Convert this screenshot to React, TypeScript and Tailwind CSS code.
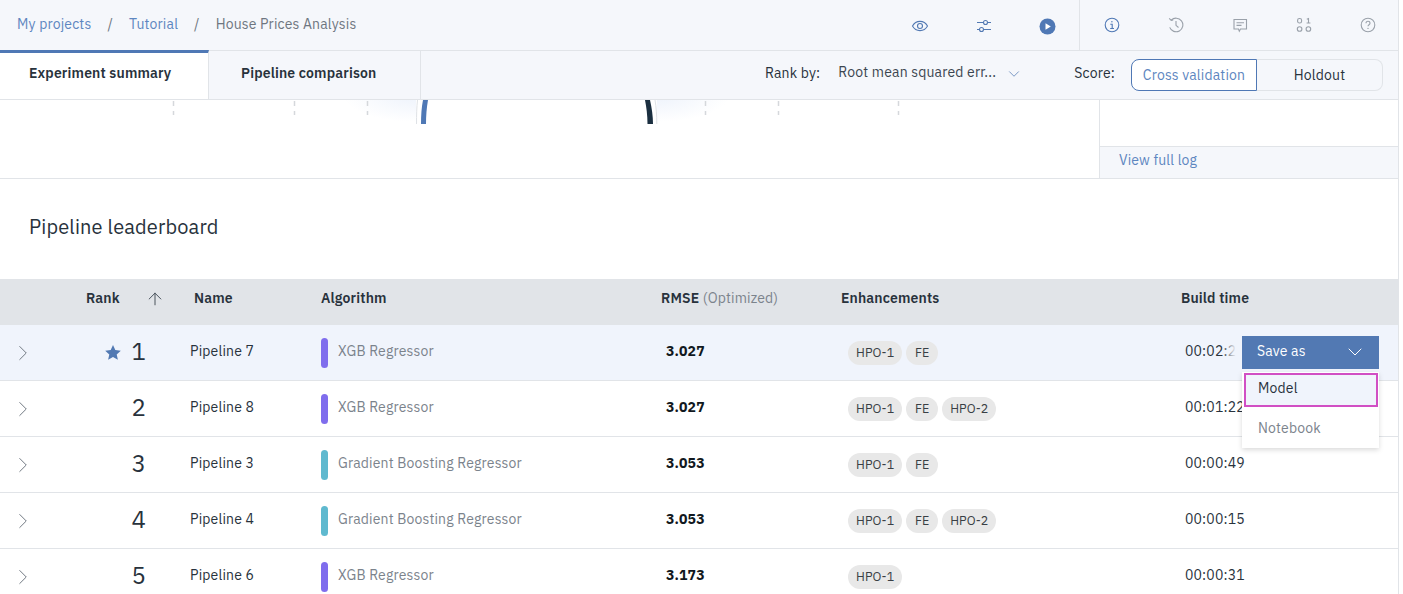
import { ChevronDown, ChevronRight, ArrowUp } from "lucide-react";

const rows = [
  { rank: 1, name: "Pipeline 7", algo: "XGB Regressor", color: "bg-[#7f6ded]", rmse: "3.027", tags: ["HPO-1", "FE"], time: "00:02:26", star: true },
  { rank: 2, name: "Pipeline 8", algo: "XGB Regressor", color: "bg-[#7f6ded]", rmse: "3.027", tags: ["HPO-1", "FE", "HPO-2"], time: "00:01:22" },
  { rank: 3, name: "Pipeline 3", algo: "Gradient Boosting Regressor", color: "bg-[#5fb9cf]", rmse: "3.053", tags: ["HPO-1", "FE"], time: "00:00:49" },
  { rank: 4, name: "Pipeline 4", algo: "Gradient Boosting Regressor", color: "bg-[#5fb9cf]", rmse: "3.053", tags: ["HPO-1", "FE", "HPO-2"], time: "00:00:15" },
  { rank: 5, name: "Pipeline 6", algo: "XGB Regressor", color: "bg-[#7f6ded]", rmse: "3.173", tags: ["HPO-1"], time: "00:00:31" },
];

function IconEye() {
  return (
    <svg width="18" height="18" viewBox="0 0 18 18" fill="none" stroke="#5279b3" strokeWidth="1.1">
      <path d="M1.500 9C3.200 5.900 5.800 4.400 9 4.400s5.800 1.500 7.500 4.600c-1.700 3.100-4.300 4.600-7.500 4.600S3.200 12.100 1.500 9z" />
      <circle cx="9" cy="9" r="2.500" />
    </svg>
  );
}

function IconSliders() {
  return (
    <svg width="16" height="16" viewBox="0 0 16 16" fill="none" stroke="#5279b3" strokeWidth="1.1">
      <path d="M1 4.500h6.500M11.500 4.500H15M1 11.500h2.500M7.500 11.500H15" />
      <circle cx="9.500" cy="4.500" r="2" />
      <circle cx="5.500" cy="11.500" r="2" />
    </svg>
  );
}

function IconPlay() {
  return (
    <svg width="17" height="17" viewBox="0 0 17 17">
      <circle cx="8.500" cy="8.500" r="8" fill="#4f78b5" />
      <path d="M6.500 5.200v6.600l5.300-3.300z" fill="#fff" />
    </svg>
  );
}

function IconInfo() {
  return (
    <svg width="16" height="16" viewBox="0 0 16 16" fill="none" stroke="#4f78b5" strokeWidth="1.1">
      <circle cx="8" cy="8" r="6.800" />
      <path d="M6.300 7.200H8.200v4.200M6.200 11.500h3.800" />
      <circle cx="7.900" cy="4.800" r="0.700" fill="#4f78b5" stroke="none" />
    </svg>
  );
}

function IconHistory() {
  return (
    <svg width="16" height="16" viewBox="0 0 16 16" fill="none" stroke="#9aa1aa" strokeWidth="1.1">
      <path d="M3.200 3.200A6.800 6.800 0 1 1 1.700 10.400" />
      <path d="M1.200 1.300l2 2 2-.4M8 4v4.300l2.500 2.200" />
    </svg>
  );
}

function IconComment() {
  return (
    <svg width="16" height="16" viewBox="0 0 16 16" fill="none" stroke="#9aa1aa" strokeWidth="1.1">
      <path d="M2 2.500h12.500v9.500H8.500l-1.200 2.200L6.500 12H2z" />
      <path d="M4.500 5.700h7.500M4.500 8.400h5" />
    </svg>
  );
}

function IconBinary() {
  return (
    <svg width="16" height="16" viewBox="0 0 16 16" fill="none" stroke="#9aa1aa" strokeWidth="1.100">
      <rect x="1.600" y="1.500" width="4" height="4.500" rx="1.800" />
      <path d="M10.800 2.200l1.700-.7V6M10.600 6h3.800" />
      <circle cx="3.600" cy="12" r="2.300" />
      <circle cx="12.400" cy="12" r="2.300" />
    </svg>
  );
}

function IconHelp() {
  return (
    <svg width="16" height="16" viewBox="0 0 16 16" fill="none" stroke="#9aa1aa" strokeWidth="1.1">
      <circle cx="8" cy="8" r="6.800" />
      <path d="M6 6.300c0-1.200.9-2 2-2s2 .8 2 1.900c0 1.500-2 1.500-2 3.100" />
      <circle cx="8" cy="11.400" r="0.700" fill="#9aa1aa" stroke="none" />
    </svg>
  );
}

function IconStar() {
  return (
    <svg width="16" height="15" viewBox="0 0 16 15">
      <path d="M8 0l2.300 5.100 5.500.6-4.100 3.700 1.200 5.400L8 12l-4.900 2.800 1.200-5.400L.2 5.700l5.500-.6z" fill="#5279b3" />
    </svg>
  );
}

// what is left of the chart after scrolling: tick lines and the two arcs
function ChartStub() {
  return (
    <svg width="1099" height="25" viewBox="0 0 1099 25" className="block">
      <defs>
        <radialGradient id="glowL" cx="0" cy="0" r="1" gradientUnits="userSpaceOnUse" gradientTransform="translate(416 -4) scale(72 26)">
          <stop offset="0" stopColor="#eef3fc" />
          <stop offset="1" stopColor="#eef3fc" stopOpacity="0" />
        </radialGradient>
        <radialGradient id="glowR" cx="0" cy="0" r="1" gradientUnits="userSpaceOnUse" gradientTransform="translate(657 -4) scale(72 26)">
          <stop offset="0" stopColor="#eef3fc" />
          <stop offset="1" stopColor="#eef3fc" stopOpacity="0" />
        </radialGradient>
      </defs>
      <rect x="340" y="0" width="76" height="25" fill="url(#glowL)" />
      <rect x="657" y="0" width="76" height="25" fill="url(#glowR)" />
      <g stroke="#d5d8dc" strokeWidth="1.500" strokeDasharray="5 5 4 6">
        <path d="M173.500 1v20M294.500 1v20M367.500 1v20M705.500 1v20M778.500 1v20M898.500 1v20" />
      </g>
      <path d="M417.500 0c-.8 7-1 15-1 24" stroke="#dfe2e6" fill="none" />
      <path d="M423 0c-1.400 7-2 15-2 24h5c0-8 .6-16 2-24z" fill="#4f78b5" />
      <path d="M645 0c1.400 7 2.500 15 2.500 24h5.500c0-8-1.200-16-3-24z" fill="#1b2f40" />
      <path d="M655 0c1.200 7 1.800 15 1.800 24" stroke="#dfe2e6" fill="none" />
    </svg>
  );
}

export default function App() {
  return (
    <div className="h-[594px] w-[1403px] overflow-hidden bg-white font-['IBM_Plex_Sans','Noto_Sans',sans-serif] text-[14px] tracking-[0.16px] text-[#28323c]">
      <div className="w-[1399px] border-r border-[#e1e4e8]">
        <header className="flex h-[51px] items-center justify-between border-b border-[#e1e4e8] bg-[#f5f7fb]">
          <nav className="flex items-center pb-px pl-[17px]">
            <span className="text-[#5d86c0]">My projects</span>
            <span className="ml-[16px] text-[#6e7680]">/</span>
            <span className="ml-[16px] text-[#5d86c0]">Tutorial</span>
            <span className="ml-[16px] text-[#6e7680]">/</span>
            <span className="ml-[16px] text-[#6e7680]">House Prices Analysis</span>
          </nav>
          <div className="flex h-full items-center">
            <div className="flex h-full items-center gap-[47px] pr-[23px] pt-[2px]">
              <IconEye />
              <IconSliders />
              <IconPlay />
            </div>
            <div className="flex h-full items-center gap-[48px] border-l border-[#e1e4e8] pl-[24px] pr-[22px]">
              <IconInfo />
              <IconHistory />
              <IconComment />
              <IconBinary />
              <IconHelp />
            </div>
          </div>
        </header>

        <div className="flex h-[49px] items-stretch justify-between border-b border-[#e1e4e8] bg-[#f5f7fb]">
          <div className="flex">
            <div className="-mt-px flex w-[209px] items-center border-r border-t-[3px] border-[#e1e4e8] border-t-[#4f78b5] bg-white pb-[5px] pl-[29px] font-semibold">
              Experiment summary
            </div>
            <div className="flex w-[212px] items-center border-r border-[#e1e4e8] pb-[4px] pl-[32px] font-semibold">
              Pipeline comparison
            </div>
          </div>
          <div className="flex items-center pr-[15px]">
            <span className="mb-[3px]">Rank by:</span>
            <span className="mb-[6px] ml-[18px] text-[#3c4650]">Root mean squared err...</span>
            <ChevronDown className="mb-[3px] ml-[9px] text-[#5279b3]" size={18} strokeWidth={1} />
            <span className="mb-[3px] ml-[51px]">Score:</span>
            <div className="ml-[16px] flex h-[32px]">
              <div className="flex w-[126px] items-center justify-center rounded-l-[8px] border border-[#4f78b5] bg-white text-[#5d86c0]">
                Cross validation
              </div>
              <div className="flex w-[126px] items-center justify-center rounded-r-[8px] border border-l-0 border-[#e1e4e8] bg-[#f5f7fb]">
                Holdout
              </div>
            </div>
          </div>
        </div>

        <div className="flex h-[79px] border-b border-[#e1e4e8]">
          <div className="w-[1099px]">
            <ChartStub />
          </div>
          <div className="flex flex-1 flex-col border-l border-[#e1e4e8]">
            <div className="flex-1" />
            <div className="flex h-[32px] items-center border-t border-[#e1e4e8] bg-[#f5f7fb] pb-[4px] pl-[19px] text-[#5d86c0]">
              View full log
            </div>
          </div>
        </div>

        <h2 className="flex h-[100px] items-center pb-[5px] pl-[29px] text-[20px] font-normal tracking-[0.15px]">
          Pipeline leaderboard
        </h2>

        <div className="relative">
          <div className="flex h-[46px] items-center bg-[#e1e4e8] pb-[7px] font-semibold">
            <span className="ml-[86px] w-[59px]">Rank</span>
            <ArrowUp className="text-[#3c4650]" size={20} strokeWidth={1.100} />
            <span className="ml-[29px] w-[127px]">Name</span>
            <span className="w-[340px]">Algorithm</span>
            <span className="w-[180px]">
              RMSE <span className="font-normal text-[#7b838c]">(Optimized)</span>
            </span>
            <span className="w-[340px]">Enhancements</span>
            <span>Build time</span>
          </div>

          {rows.map((row) => (
            <div
              key={row.rank}
              className={`flex h-[56px] items-center border-b border-[#e1e4e8] ${row.star ? "bg-[#f0f4fc]" : "bg-white"}`}
            >
              <ChevronRight className="ml-[10px] mt-px text-[#6e7680]" size={26} strokeWidth={0.9} />
              <div className="flex w-[110px] items-center justify-end gap-[10px]">
                {row.star && <IconStar />}
                <span className="mb-[4px] w-[15px] text-right text-[24px] font-normal leading-none">{row.rank}</span>
              </div>
              <span className="mb-[2px] ml-[44px] w-[131px]">{row.name}</span>
              <span className={`h-[30px] w-[7px] rounded-full ${row.color}`} />
              <span className="mb-[3px] ml-[10px] w-[328px] text-[#7b838c]">{row.algo}</span>
              <span className="mb-[2px] w-[182px] font-bold text-[#111820]">{row.rmse}</span>
              <div className="flex w-[337px] gap-[4px]">
                {row.tags.map((tag) => (
                  <span
                    key={tag}
                    className="flex h-[24px] min-w-[32px] items-center justify-center rounded-full bg-[#e8e8e8] px-[8px] pb-px text-[12.500px] tracking-[0.05px] text-[#3a3f45]"
                  >
                    {tag}
                  </span>
                ))}
              </div>
              <span className="mb-[2px]">{row.time}</span>
            </div>
          ))}

          <div className="absolute left-[1222px] top-[57px] w-[157px]">
            <div className="flex">
              <div className="h-[33px] w-[20px] bg-gradient-to-r from-[#f0f4fc00] to-[#f0f4fc] to-70%" />
              <div className="flex h-[33px] flex-1 items-center justify-between bg-[#5279b3] pb-[2px] pl-[15px] pr-[12px] text-white">
                Save as
                <ChevronDown size={24} strokeWidth={1} />
              </div>
            </div>
            <div className="ml-[20px] mt-[3px] bg-white pl-[2px] pr-px pt-px shadow-[0_2px_5px_rgba(0,0,0,0.15)]">
              <div className="flex h-[34px] items-center border-2 border-[#d14fc4] bg-[#f0f4fc] pb-[3px] pl-[12px]">Model</div>
              <div className="flex h-[41px] items-center pl-[14px] pt-[2px] text-[#7b838c]">Notebook</div>
            </div>
          </div>
        </div>
      </div>
    </div>
  );
}
